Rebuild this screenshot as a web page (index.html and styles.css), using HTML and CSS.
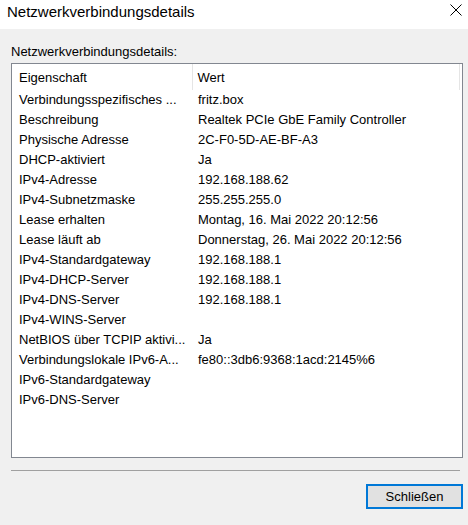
FILE: index.html
```html
<!DOCTYPE html>
<html lang="de">
<head>
    <meta charset="UTF-8">
    <title>Netzwerkverbindungsdetails</title>
    <link rel="stylesheet" href="styles.css">
</head>
<body>
    <div class="window">
        <div class="titlebar">
            <span class="title">Netzwerkverbindungsdetails</span>
            <span class="close">
                <svg width="12" height="12" viewBox="0 0 12 12">
                    <path d="M0.5 0.5 L11.5 11.5 M11.5 0.5 L0.5 11.5" stroke="#000" stroke-width="1" fill="none"/>
                </svg>
            </span>
        </div>

        <div class="content">
            <div class="label">Netzwerkverbindungsdetails:</div>

            <div class="listbox">
                <table class="details">
                    <thead>
                        <tr>
                            <th class="col-prop">Eigenschaft</th>
                            <th class="col-value">Wert</th>
                        </tr>
                    </thead>
                    <tbody>
                        <tr><td>Verbindungsspezifisches ...</td><td>fritz.box</td></tr>
                        <tr><td>Beschreibung</td><td>Realtek PCIe GbE Family Controller</td></tr>
                        <tr><td>Physische Adresse</td><td>2C-F0-5D-AE-BF-A3</td></tr>
                        <tr><td>DHCP-aktiviert</td><td>Ja</td></tr>
                        <tr><td>IPv4-Adresse</td><td>192.168.188.62</td></tr>
                        <tr><td>IPv4-Subnetzmaske</td><td>255.255.255.0</td></tr>
                        <tr><td>Lease erhalten</td><td>Montag, 16. Mai 2022 20:12:56</td></tr>
                        <tr><td>Lease läuft ab</td><td>Donnerstag, 26. Mai 2022 20:12:56</td></tr>
                        <tr><td>IPv4-Standardgateway</td><td>192.168.188.1</td></tr>
                        <tr><td>IPv4-DHCP-Server</td><td>192.168.188.1</td></tr>
                        <tr><td>IPv4-DNS-Server</td><td>192.168.188.1</td></tr>
                        <tr><td>IPv4-WINS-Server</td><td></td></tr>
                        <tr><td>NetBIOS über TCPIP aktivi...</td><td>Ja</td></tr>
                        <tr><td>Verbindungslokale IPv6-A...</td><td>fe80::3db6:9368:1acd:2145%6</td></tr>
                        <tr><td>IPv6-Standardgateway</td><td></td></tr>
                        <tr><td>IPv6-DNS-Server</td><td></td></tr>
                    </tbody>
                </table>
            </div>

            <div class="separator"></div>

            <div class="buttons">
                <button class="btn default">Schließen</button>
            </div>
        </div>
    </div>
</body>
</html>
```

FILE: styles.css
```css
html, body {
    margin: 0;
    padding: 0;
}
body {
    width: 468px;
    height: 525px;
    background: #f0f0f0;
    font-family: "Liberation Sans", Arial, sans-serif;
    font-size: 13px;
    color: #000;
    overflow: hidden;
}
.window {
    display: flex;
    flex-direction: column;
    height: 525px;
}
.titlebar {
    height: 29px;
    background: #fff;
    display: flex;
    align-items: center;
    justify-content: space-between;
    flex-shrink: 0;
}
.title {
    padding-left: 7px;
    font-size: 15px;
    margin-top: -6px;
}
.close {
    display: flex;
    width: 12px;
    height: 12px;
    margin-right: 6px;
    margin-top: -9px;
}
.content {
    padding: 15px 5px 0 11px;
    display: flex;
    flex-direction: column;
}
.label {
    line-height: 15px;
    height: 19px;
}

/* list view with two columns */
.listbox {
    height: 393px;
    background: #fff;
    border: 1px solid #828790;
    overflow: hidden;
}
.details {
    border-collapse: collapse;
    width: 448px;
    table-layout: fixed;
}
.details th {
    font-weight: normal;
    text-align: left;
    height: 26px;
    padding: 0;
    vertical-align: middle;
}
.col-prop {
    width: 180px;
    padding-left: 7px !important;
    box-sizing: border-box;
}
.col-value {
    padding-left: 5px !important;
    border-left: 1px solid #e5e5e5;
    border-right: 1px solid #e5e5e5;
}
.details td {
    height: 20px;
    padding: 0 0 0 7px;
    white-space: nowrap;
    overflow: hidden;
    line-height: 20px;
}
.details td + td {
    padding-left: 6px;
}
.separator {
    height: 1px;
    background: #a0a0a0;
    margin: 12px 3px 0 0;
}
.buttons {
    display: flex;
    justify-content: flex-end;
    padding-top: 13px;
}
.btn {
    width: 97px;
    height: 25px;
    box-sizing: border-box;
    background: #e1e1e1;
    border: 1px solid #adadad;
    font-family: "Liberation Sans", Arial, sans-serif;
    font-size: 13px;
    color: #000;
    padding: 0;
}
.btn.default {
    border: 2px solid #0078d7;
}
```
